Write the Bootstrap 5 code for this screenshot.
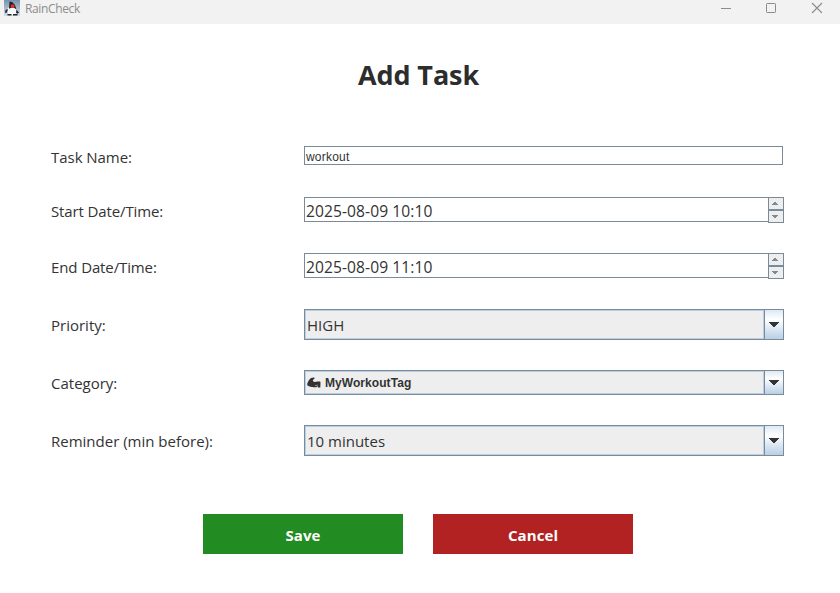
<!DOCTYPE html>
<html lang="en">
<head>
<meta charset="utf-8">
<meta name="viewport" content="width=device-width, initial-scale=1">
<title>RainCheck</title>
<link href="https://cdn.jsdelivr.net/npm/bootstrap@5.3.0/dist/css/bootstrap.min.css" rel="stylesheet">
<style>
  body { font-family: "Open Sans", "Noto Sans", sans-serif; font-size: 15px; line-height: 22px; color: #333; height: 593px; overflow: hidden; }
  svg { display: block; flex: none; }
  .titlebar { height: 24px; background: #f2f2f2; color: #8c8c8c; font-size: 12px; letter-spacing: -.37px; line-height: 18px; padding-left: 4px; }
  .app-name { margin-left: 5px; }
  .win-btn { width: 46px; height: 16px; }
  .screen-title { font-size: 27px; line-height: 38px; letter-spacing: -.1px; margin: 32px 0 50px; color: #2d2d2d; padding-right: 3px; }
  .task-form { gap: 30px; padding: 0 56px 0 51px; }
  .form-line > label { width: 253px; padding-top: 2px; letter-spacing: -.04px; }
  .form-line.r-combo > label, .form-line.r-small > label { padding-top: 1px; letter-spacing: 0; }
  .r-text { height: 23px; }
  .r-spin { height: 26px; }
  .r-spin > label { letter-spacing: -.12px !important; }
  .r-combo { height: 31px; }
  .r-small { height: 25px; }
  .edge { border: 1px solid #7a8a99; }
  .text-box { width: 479px; height: 19px; font: 12px/18px "Liberation Sans", Arial, sans-serif; letter-spacing: .2px; padding: 1px 0 0 1px; }
  .spinner-box { width: 480px; }
  .spin-value { height: 25px; border-right: 0; padding-left: 1px; font-size: 15.6px; line-height: 27px; letter-spacing: .08px; }
  .spin-btns { width: 16px; }
  .spin-btn { height: 13px; background: #eee; padding-right: 3px; }
  .combo { width: 480px; }
  .combo-value { background: #eee; box-shadow: inset 0 0 0 1px #b8cfe5; padding-left: 2px; }
  .combo-arrow { width: 19px; border-left: 1px solid #7a8a99; background: linear-gradient(#dde8f3, #fff 32%, #b8cfe5); }
  .tag-name { font: bold 12px/16px "Liberation Sans", Arial, sans-serif; letter-spacing: .06px; margin-left: 4px; }
  .actions { gap: 30px; margin-top: 58px; padding-right: 4px; }
  .action { width: 200px; height: 40px; border: 0; border-radius: 0; padding: 1px 0 0; font-size: 15px; line-height: 22px; letter-spacing: .08px; font-weight: 700; color: #fff; }
  .save, .save:hover { background: #228b22; color: #fff; }
  .cancel, .cancel:hover { background: #b22222; color: #fff; }
</style>
</head>
<body class="bg-white m-0">
<header class="titlebar d-flex align-items-start">
  <svg width="16" height="16" viewBox="0 0 16 16">
    <defs><linearGradient id="sky" x2="0" y2="1"><stop stop-color="#7893ad"/><stop offset="1" stop-color="#d3dee8"/></linearGradient></defs>
    <rect width="16" height="16" fill="url(#sky)"/>
    <path d="M4.500 7.500L10 7l2.500 2.500L15 12l-1.500 1.500-1.500-1V15H4v-3l-2 1-1-1.500z" fill="#fafafa"/>
    <path d="M5.500 1.500l3 .8 2.500 2.700 1.500 4.500-2.500-1.800-2-.3L5 8.800z" fill="#20242b"/>
    <path d="M1.500 10l2.500-1-1 3.500-2 .5zM12.500 9.500l2.500 3-1.500 1.200-1.500-1.200zM3.500 14h4v1.500h-4zM9 14h4.500v1.500H9z" fill="#20242b"/>
    <ellipse cx="8.600" cy="6" rx="2" ry="1.800" fill="#ee2a24"/>
  </svg>
  <span class="app-name">RainCheck</span>
  <div class="d-flex ms-auto">
    <span class="win-btn d-flex justify-content-center"><svg width="12" height="16" viewBox="0 0 12 16" shape-rendering="crispEdges"><path d="M2 8.500h10" stroke="#8c8c8c"/></svg></span>
    <span class="win-btn d-flex justify-content-center"><svg width="12" height="16" viewBox="0 0 12 16"><rect x="1.500" y="3.500" width="9" height="9" rx=".7" fill="none" stroke="#8c8c8c"/></svg></span>
    <span class="win-btn d-flex justify-content-center"><svg width="12" height="16" viewBox="0 0 12 16"><path d="M1 3l10 10M11 3L1 13" stroke="#8c8c8c" stroke-width="1.100"/></svg></span>
  </div>
</header>
<main>
  <h1 class="screen-title text-center fw-bold">Add Task</h1>
  <form class="task-form d-flex flex-column">
    <div class="form-line r-text d-flex align-items-center">
      <label>Task Name:</label>
      <div class="text-box edge">workout</div>
    </div>
    <div class="form-line r-spin d-flex align-items-center">
      <label>Start Date/Time:</label>
      <div class="spinner-box d-flex align-items-start">
        <div class="spin-value edge flex-grow-1">2025-08-09 10:10</div>
        <div class="spin-btns d-flex flex-column">
          <div class="spin-btn edge d-flex align-items-center justify-content-center"><svg width="6" height="3" viewBox="0 0 6 3" shape-rendering="crispEdges"><path d="M2 0h2v1h1v1h1v1H0V2h1V1h1z" fill="#7a8a99"/></svg></div>
          <div class="spin-btn edge d-flex align-items-center justify-content-center"><svg width="6" height="3" viewBox="0 0 6 3" shape-rendering="crispEdges"><path d="M0 0h6v1H5v1H4v1H2V2H1V1H0z" fill="#7a8a99"/></svg></div>
        </div>
      </div>
    </div>
    <div class="form-line r-spin d-flex align-items-center">
      <label>End Date/Time:</label>
      <div class="spinner-box d-flex align-items-start">
        <div class="spin-value edge flex-grow-1">2025-08-09 11:10</div>
        <div class="spin-btns d-flex flex-column">
          <div class="spin-btn edge d-flex align-items-center justify-content-center"><svg width="6" height="3" viewBox="0 0 6 3" shape-rendering="crispEdges"><path d="M2 0h2v1h1v1h1v1H0V2h1V1h1z" fill="#7a8a99"/></svg></div>
          <div class="spin-btn edge d-flex align-items-center justify-content-center"><svg width="6" height="3" viewBox="0 0 6 3" shape-rendering="crispEdges"><path d="M0 0h6v1H5v1H4v1H2V2H1V1H0z" fill="#7a8a99"/></svg></div>
        </div>
      </div>
    </div>
    <div class="form-line r-combo d-flex align-items-center">
      <label>Priority:</label>
      <div class="combo edge h-100 d-flex">
        <div class="combo-value flex-grow-1 d-flex align-items-center"><span>HIGH</span></div>
        <div class="combo-arrow d-flex align-items-center justify-content-center"><svg width="10" height="5" viewBox="0 0 10 5" shape-rendering="crispEdges"><path d="M0 0h10v1H9v1H8v1H7v1H6v1H4V4H3V3H2V2H1V1H0z" fill="#333"/></svg></div>
      </div>
    </div>
    <div class="form-line r-small d-flex align-items-center">
      <label>Category:</label>
      <div class="combo edge h-100 d-flex">
        <div class="combo-value flex-grow-1 d-flex align-items-center">
          <svg width="14" height="12" viewBox="0 0 14 12"><path d="M4 .9L6.600.4q1.200.2.900 1.400L5.800 3l.5 1.500 1.700.6 2-.7 3 .2q.6.400.5 1.400l-.2 4.400-2.200.2-.5-1.300-1.300.9Q3.500 10.800.4 8.600-.1 7 .9 5 1.900 2.400 4 .9z" fill="#333"/><path d="M8 8.400l2 .2 1-.9" stroke="#eee" stroke-width=".5" fill="none"/></svg>
          <span class="tag-name">MyWorkoutTag</span>
        </div>
        <div class="combo-arrow d-flex align-items-center justify-content-center"><svg width="10" height="5" viewBox="0 0 10 5" shape-rendering="crispEdges"><path d="M0 0h10v1H9v1H8v1H7v1H6v1H4V4H3V3H2V2H1V1H0z" fill="#333"/></svg></div>
      </div>
    </div>
    <div class="form-line r-combo d-flex align-items-center">
      <label>Reminder (min before):</label>
      <div class="combo edge h-100 d-flex">
        <div class="combo-value flex-grow-1 d-flex align-items-center"><span>10 minutes</span></div>
        <div class="combo-arrow d-flex align-items-center justify-content-center"><svg width="10" height="5" viewBox="0 0 10 5" shape-rendering="crispEdges"><path d="M0 0h10v1H9v1H8v1H7v1H6v1H4V4H3V3H2V2H1V1H0z" fill="#333"/></svg></div>
      </div>
    </div>
  </form>
  <div class="actions d-flex justify-content-center">
    <button type="button" class="btn action save">Save</button>
    <button type="button" class="btn action cancel">Cancel</button>
  </div>
</main>
<script src="https://cdn.jsdelivr.net/npm/bootstrap@5.3.0/dist/js/bootstrap.bundle.min.js"></script>
</body>
</html>
